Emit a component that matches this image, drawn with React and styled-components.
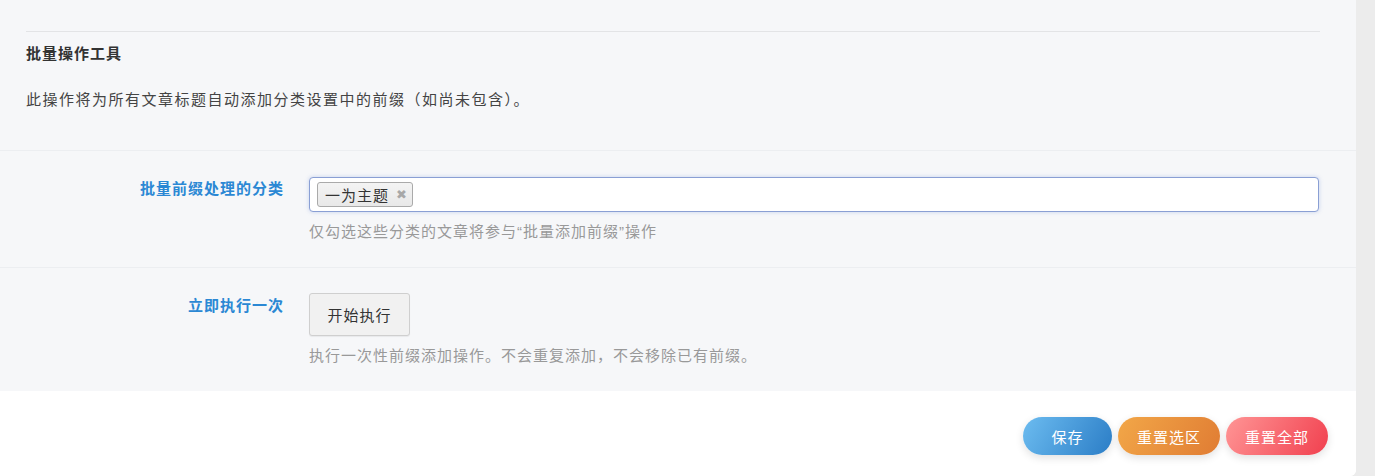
import React from 'react';
import styled, {createGlobalStyle} from 'styled-components';

const GlobalStyle = createGlobalStyle`
  body {
    margin: 0;
    background: #ececec;
    font-family: "Liberation Sans", "Noto Sans CJK SC", sans-serif;
  }
`

const Page = styled.div`
  display: flex;
  width: 1375px;
  height: 476px;
  overflow: hidden;
`

const Panel = styled.div`
  flex: 1;
  display: flex;
  flex-direction: column;
  background: #fff;
  border-bottom-right-radius: 6px;
  overflow: hidden;
`

const Track = styled.div`
  width: 19px;
  background: #ececec;
`

const Intro = styled.div`
  background: #f6f7f9;
  padding: 31px 36px 0 26px;
  height: 151px;
  box-sizing: border-box;
  border-bottom: 1px solid #eceef1;
`

const Rule = styled.div`
  border-top: 1px solid #e3e4e6;
`

const Heading = styled.h3`
  margin: 12px 0 0;
  font-size: 15px;
  letter-spacing: 1px;
  line-height: 20px;
  font-weight: 700;
  color: #333;
`

const Desc = styled.p`
  margin: 26px 0 0;
  font-size: 15px;
  letter-spacing: 1.5px;
  line-height: 20px;
  color: #444;
`

const Row = styled.div`
  display: grid;
  grid-template-columns: 284px 1010px;
  column-gap: 25px;
  background: #f6f7f9;
  padding: ${p => p.$pad};
  border-bottom: ${p => p.$last ? 'none' : '1px solid #eceef1'};
`

const Label = styled.div`
  text-align: right;
  padding-top: ${p => p.$top}px;
  font-size: 15px;
  letter-spacing: 1px;
  line-height: 20px;
  font-weight: 700;
  color: #2b88d4;
`

const Field = styled.div`
  display: flex;
  flex-direction: column;
  align-items: flex-start;
`

const TagInput = styled.div`
  align-self: stretch;
  height: 35px;
  box-sizing: border-box;
  display: flex;
  align-items: center;
  padding: 0 7px;
  background: #fff;
  border: 1px solid #8a9fd4;
  border-radius: 4px;
  box-shadow: 0 0 4px rgba(110, 140, 220, 0.35);
`

const Tag = styled.span`
  display: inline-flex;
  align-items: center;
  gap: 7px;
  height: 25px;
  box-sizing: border-box;
  padding: 0 5px 0 7px;
  border: 1px solid #aaa;
  border-radius: 3px;
  background: linear-gradient(#f4f4f4, #e8e8e8);
  font-size: 15px;
  letter-spacing: 1px;
  color: #333;
`

const TagClose = styled.span`
  font-size: 13px;
  line-height: 1;
  color: #a8a8a8;
  letter-spacing: 0;
`

const Help = styled.div`
  margin-top: 10px;
  font-size: 15px;
  letter-spacing: 1px;
  line-height: 20px;
  color: #999;
`

const PlainButton = styled.button`
  width: 101px;
  height: 43px;
  border: 1px solid #cfcfcf;
  border-radius: 3px;
  background: #f1f1f1;
  box-shadow: 0 1px 1px rgba(0, 0, 0, 0.06);
  font-family: inherit;
  font-size: 15px;
  letter-spacing: 1px;
  color: #333;
`

const Footer = styled.div`
  flex: 1;
  display: flex;
  justify-content: flex-end;
  align-items: flex-start;
  gap: 6px;
  padding: 26px 28px 0 0;
  background: #fff;
`

const tones = {
  blue: 'linear-gradient(120deg, #6cbcf0, #2b7dc6)',
  orange: 'linear-gradient(120deg, #f2a748, #e07c33)',
  red: 'linear-gradient(120deg, #ff9595, #f1404f)',
}

const Pill = styled.button`
  min-width: 89px;
  height: 38px;
  padding: 0 19px;
  border: none;
  border-radius: 19px;
  background: ${p => tones[p.$tone]};
  box-shadow: 0 3px 8px rgba(0, 0, 0, 0.12);
  font-family: inherit;
  font-size: 15px;
  letter-spacing: 1px;
  color: #fff;
`

export default function App() {
  return (
    <Page lang="zh-CN">
      <GlobalStyle/>
      <Panel>
        <Intro>
          <Rule/>
          <Heading>批量操作工具</Heading>
          <Desc>此操作将为所有文章标题自动添加分类设置中的前缀（如尚未包含）。</Desc>
        </Intro>
        <Row $pad="26px 0 25px">
          <Label $top={2}>批量前缀处理的分类</Label>
          <Field>
            <TagInput>
              <Tag>一为主题<TagClose>✖</TagClose></Tag>
            </TagInput>
            <Help>仅勾选这些分类的文章将参与“批量添加前缀”操作</Help>
          </Field>
        </Row>
        <Row $pad="25px 0 25px" $last>
          <Label $top={3}>立即执行一次</Label>
          <Field>
            <PlainButton>开始执行</PlainButton>
            <Help>执行一次性前缀添加操作。不会重复添加，不会移除已有前缀。</Help>
          </Field>
        </Row>
        <Footer>
          <Pill $tone="blue">保存</Pill>
          <Pill $tone="orange">重置选区</Pill>
          <Pill $tone="red">重置全部</Pill>
        </Footer>
      </Panel>
      <Track/>
    </Page>
  );
}
